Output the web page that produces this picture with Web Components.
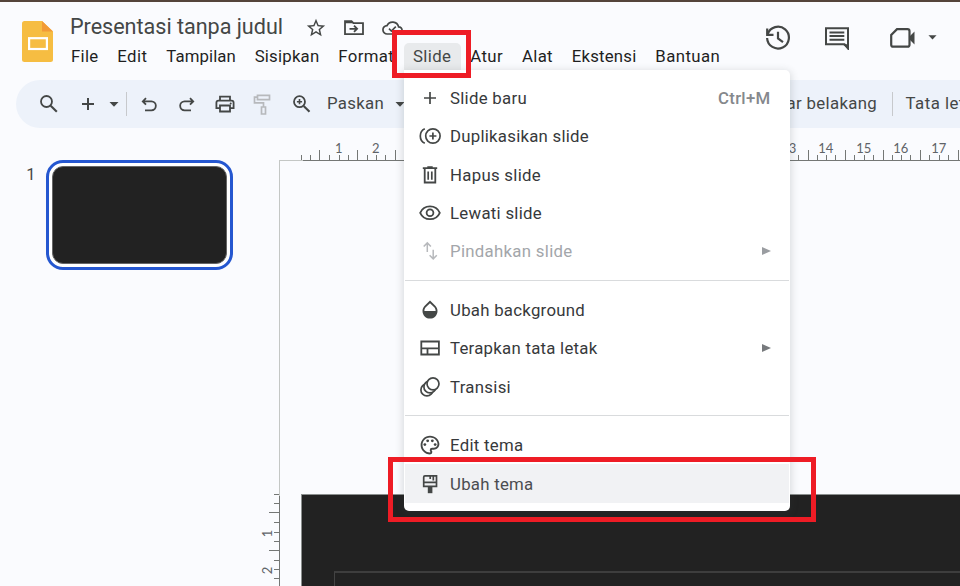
<!DOCTYPE html>
<html lang="id">
<head>
<meta charset="utf-8">
<title>Presentasi tanpa judul</title>
<style>
    body {
        margin: 0;
        background: #fafbfe;
        font-family: Roboto, "Liberation Sans", sans-serif;
        overflow: hidden;
    }
</style>
</head>
<body>
<slides-app></slides-app>

<script>
// icons by name, each one is [viewBox, markup]
const ICONS = {
    logo: ["0 0 31 41", `<path fill="#f6bd42" d="M2.5 0H20l11 10.500V38.500Q31 41 28.500 41h-26Q0 41 0 38.500v-36Q0 0 2.500 0z"/><path fill="#f29a36" d="M20 0l11 10.500H20z"/><rect x="7.100" y="17.200" width="17.800" height="10.800" fill="none" stroke="#fff" stroke-width="2.200"/>`],
    star: ["0 0 24 24", `<path d="M22 9.240l-7.190-.620L12 2 9.190 8.630 2 9.240l5.460 4.730L5.820 21 12 17.270 18.180 21l-1.630-7.030L22 9.240zM12 15.400l-3.760 2.270 1-4.280-3.320-2.880 4.380-.380L12 6.100l1.710 4.040 4.380.380-3.320 2.880 1 4.280L12 15.400z"/>`],
    folder: ["0 0 20 16", `<path d="M1 14.200V1.200h6.500l2 2H19v11z" ${line(1.8)}/><path d="M1 1.200h6.500l2 2H1z"/><path d="M5.500 8.800h7.200M10 5.700l3.100 3.100-3.100 3.100" ${line(1.8)}/>`],
    cloud: ["0 0 21 16", `<path d="M5.300 14A4.200 4.200 0 0 1 5 5.600 6.200 6.200 0 0 1 16.600 6.800 3.600 3.600 0 0 1 16.400 14z" ${line(1.7)}/><path d="M7 8.600l2.400 2.400 4.400-4.400" ${line(1.6)}/>`],
    history: ["0 0 26 26", `<path d="M2.600 9.300A10.900 10.900 0 1 1 2.100 13" ${line(2.2)}/><path d="M2.200 3.500v6.300h6.300" ${line(2.2)}/><path d="M13 6.700v6.800l5 3.700" ${line(2.2)}/>`],
    comment: ["0 0 26 24", `<path d="M24 22.500V2.200H2v16h18.500z" ${line(2)}/><path d="M18.500 18.200H25V24z"/><path d="M5.500 6.500h14.800M5.500 10.100h14.800M5.500 13.800h14.800" ${line(2)}/>`],
    meet: ["0 0 26 20", `<path d="M7 1.200h10.500q2 0 2 2v13.500q0 2-2 2H3.200q-2 0-2-2V7z" ${line(2.2)}/><path d="M19 9l5.500-5.500v13L19 11z"/>`],
    caret: ["0 0 10 5", `<path d="M.5 0h9L5 4.800z"/>`],
    search: ["0 0 24 24", `<circle cx="9.500" cy="9.500" r="5.500" ${line(1.8)}/><path d="M13.700 13.700l6.100 6.100" ${line(2.1)}/>`],
    plus: ["0 0 24 24", `<path d="M12 6v12M6 12h12" ${line(2)}/>`],
    undo: ["0 0 24 24", `<path d="M9 6.200L5.800 9.400l3.200 3.200M6 9.400h8.400a4 4 0 0 1 0 8.900H8" ${line(1.8)}/>`],
    redo: ["0 0 24 24", `<path d="M15 6.200l3.200 3.200-3.200 3.200M18 9.400H9.600a4 4 0 0 0 0 8.900h6.400" ${line(1.8)}/>`],
    print: ["0 0 24 24", `<path d="M7 8.500V4.700h10v3.800M6.800 16.200H3.400v-5.500q0-2 2-2h13.200q2 0 2 2v5.500h-3.400M7 13.500h10v6H7z" ${line(1.8)}/><circle cx="17.700" cy="11.500" r="1"/>`],
    roller: ["0 0 24 24", `<path d="M7.500 3.400h12v4.200h-12zM7.500 5.200H4.500v5.700h9v4M11.500 15h4v7h-4z" ${line(1.7)}/>`],
    zoom: ["0 0 24 24", `<circle cx="9.500" cy="9.700" r="5.500" ${line(1.8)}/><path d="M13.700 13.900l5.800 5.800" ${line(2.1)}/><path d="M9.500 7.100v5.200M6.900 9.700h5.200" ${line(1.6)}/>`],
    add: ["0 0 24 24", `<path d="M12 6v12M6 12h12" ${line(1.7)}/>`],
    duplicate: ["0 0 24 24", `<circle cx="14.900" cy="12" r="7.200" ${line(1.7)}/><path d="M14.900 8.500v7M11.400 12h7M6.800 4.700C3.900 6 2.300 8.800 2.300 12s1.600 6 4.500 7.300" ${line(1.7)}/>`],
    trash: ["0 0 24 24", `<path d="M4.800 5.200h14.400M6.700 5.200v14.300h10.600V5.200M9.300 4.100h5.400" ${line(1.8)}/><path d="M10.200 8.500v8.200M13.800 8.500v8.200" ${line(1.7)}/>`],
    eye: ["0 0 24 24", `<path d="M2.200 11.800C3.900 8 7.600 5.400 12 5.400s8.100 2.600 9.800 6.400c-1.700 3.800-5.400 6.400-9.800 6.400s-8.100-2.600-9.800-6.400z" ${line(1.8)}/><circle cx="12" cy="11.800" r="3.400" ${line(1.8)}/>`],
    swap: ["0 0 24 24", `<path d="M9.300 13V4M5.700 7.500l3.600-3.600 3.600 3.600M15.200 10.800v9M11.600 16.300l3.600 3.600 3.600-3.600" ${line(1.5)}/>`],
    drop: ["-.8 -.3 25.600 25.600", `<path d="M17.660 8L12 2.350 6.340 8C4.780 9.560 4 11.640 4 13.640s.780 4.110 2.340 5.670 3.610 2.350 5.660 2.350 4.100-.790 5.660-2.350S20 15.640 20 13.640 19.220 9.560 17.660 8zM6 13.500c.010-1.900.620-3 1.760-4.100L12 5.200l4.240 4.200C17.380 10.500 17.990 11.600 18 13.500H6z"/>`],
    layout: ["0 0 24 24", `<path d="M3.300 5.500h17.600v13H3.300zM3.300 12.300h17.600M9.500 12.300v6.200" ${line(1.8)}/>`],
    motion: ["0 0 24 24", `<g stroke="#444746" stroke-width="1.700" fill="#fff"><circle cx="8.900" cy="14.900" r="6"/><circle cx="11.900" cy="11.900" r="6"/><circle cx="15" cy="8.800" r="6"/></g>`],
    palette: ["-.8 -.8 25.600 25.600", `<path d="M12 22C6.490 22 2 17.510 2 12S6.490 2 12 2s10 4.040 10 9c0 3.310-2.690 6-6 6h-1.770c-.280 0-.5.220-.5.5 0 .120.050.230.130.330.410.470.640 1.060.640 1.670A2.500 2.500 0 0 1 12 22zm0-18c-4.410 0-8 3.590-8 8s3.590 8 8 8c.280 0 .5-.220.5-.5a.540.540 0 0 0-.140-.350c-.410-.460-.630-1.050-.630-1.650a2.500 2.500 0 0 1 2.500-2.500H16c2.210 0 4-1.790 4-4 0-3.860-3.590-7-8-7z"/><circle cx="6.500" cy="11.500" r="1.500"/><circle cx="9.500" cy="7.500" r="1.500"/><circle cx="14.500" cy="7.500" r="1.500"/><circle cx="17.500" cy="11.500" r="1.500"/>`],
    brush: ["0 0 24 24", `<path d="M5.700 14.300V5.200q0-1.300 1.300-1.300h11.500v10.400zM5.700 10.400h12.800M12.200 4v3M15.300 4v4.500" ${line(1.7)}/><path d="M9.800 14h4.600v7.200H9.800z"/>`],
    more: ["0 0 9 8", `<path d="M0 0l9 4-9 4z"/>`]
};

function line(width) {
    return `fill="none" stroke="currentColor" stroke-width="${width}"`;
}

class UiIcon extends HTMLElement {

    constructor() {
        super();
        const root = this.attachShadow({mode: "open"});
        const [box, shape] = ICONS[this.getAttribute("name")];
        const w = this.getAttribute("w") || 24;
        const h = this.getAttribute("h") || 24;
        root.innerHTML = `
            <style>
                :host { display: block; flex: none; width: ${w}px; height: ${h}px; color: #444746; }
                :host([muted]) { color: #b7b9bc; }
                :host([grey]) { color: #9a9da1; }
                :host([mid]) { color: #777a7d; }
                svg { display: block; width: 100%; height: 100%; fill: currentColor; }
            </style>
            <svg viewBox="${box}">${shape}</svg>
        `;
    }

}

// label that tracks its letters out to the given width
class FitLabel extends HTMLElement {

    constructor() {
        super();
        this.attachShadow({mode: "open"}).innerHTML = `
            <style>
                :host { display: block; flex: none; white-space: nowrap; }
            </style>
            <slot></slot>
        `;
    }

    connectedCallback() {
        const w = parseFloat(this.getAttribute("w"));
        const range = document.createRange();
        range.selectNodeContents(this);
        const natural = range.getBoundingClientRect().width;
        this.style.width = w + "px";
        this.style.letterSpacing = (w - natural) / this.textContent.length + "px";
    }

}

class MenuBar extends HTMLElement {

    constructor() {
        super();
        const items = [["File", 27.5], ["Edit", 30.3], ["Tampilan", 69.5], ["Sisipkan", 64.8], ["Format", 56],
            ["Slide", 38.4], ["Atur", 33], ["Alat", 31], ["Ekstensi", 64.8], ["Bantuan", 65]];
        this.attachShadow({mode: "open"}).innerHTML = `
            <style>
                :host { display: flex; font-size: 16.8px; line-height: 27px; height: 27px; color: #1f1f1f; }
                div { padding: 0 9.4px; }
                .open { background: #e8eaec; border-radius: 5px 5px 0 0; color: #444746; }
            </style>
            ${items.map(([text, w]) => `<div class="${text === "Slide" ? "open" : ""}"><fit-label w="${w}">${text}</fit-label></div>`).join("")}
        `;
    }

}

class AppHeader extends HTMLElement {

    constructor() {
        super();
        this.attachShadow({mode: "open"}).innerHTML = `
            <style>
                :host { display: flex; height: 80px; border-top: 2px solid #54443a; box-sizing: border-box; }
                .logo { margin: 19px 0 0 22px; }
                .main { margin-left: 8.6px; width: 680px; }
                .title { display: flex; align-items: center; height: 41px; padding-left: 8.4px; font-size: 21.6px; color: #444746; }
                .title fit-label { line-height: 26px; margin-bottom: -9px; }
                .title ui-icon { margin-top: 11px; }
                .star { margin-left: 22px; }
                .folder { margin-left: 17px; }
                .cloud { margin-left: 18px; }
                .actions { display: flex; align-items: center; height: 72px; margin-left: 23.5px; }
                .actions .comment { margin-left: 33px; }
                .actions .meet { margin-left: 39.5px; }
                .actions .caret { margin-left: 12px; margin-bottom: 2px; }
            </style>
            <ui-icon class="logo" name="logo" w="31" h="41"></ui-icon>
            <div class="main">
                <div class="title">
                    <fit-label w="213">Presentasi tanpa judul</fit-label>
                    <ui-icon class="star" name="star" w="22" h="22"></ui-icon>
                    <ui-icon class="folder" name="folder" w="20" h="16"></ui-icon>
                    <ui-icon class="cloud" name="cloud" w="21" h="16"></ui-icon>
                </div>
                <menu-bar></menu-bar>
            </div>
            <div class="actions">
                <ui-icon name="history" w="26" h="26"></ui-icon>
                <ui-icon class="comment" name="comment" w="26" h="24"></ui-icon>
                <ui-icon class="meet" name="meet" w="26" h="20"></ui-icon>
                <ui-icon class="caret" name="caret" w="9" h="5"></ui-icon>
            </div>
        `;
    }

}

class ToolBar extends HTMLElement {

    constructor() {
        super();
        this.attachShadow({mode: "open"}).innerHTML = `
            <style>
                :host {
                    display: flex;
                    align-items: center;
                    height: 48px;
                    margin-left: 16px;
                    border-radius: 24px 0 0 24px;
                    background: #edf2fa;
                    overflow: hidden;
                    font-size: 16.8px;
                    color: #444746;
                }
                i { flex: none; width: 1px; height: 24px; background: #c7c9cc; }
                fit-label { padding-bottom: 2px; }
                .fill { flex: none; width: 472.5px; display: flex; justify-content: flex-end; }
            </style>
            <ui-icon name="search" style="margin-left:20.5px"></ui-icon>
            <ui-icon name="plus" style="margin-left:15.5px"></ui-icon>
            <ui-icon name="caret" w="10" h="5" style="margin-left:9px"></ui-icon>
            <i style="margin-left:7px"></i>
            <ui-icon name="undo" style="margin-left:10px"></ui-icon>
            <ui-icon name="redo" style="margin-left:14px"></ui-icon>
            <ui-icon name="print" style="margin-left:14px"></ui-icon>
            <ui-icon name="roller" muted style="margin-left:13px"></ui-icon>
            <ui-icon name="zoom" style="margin-left:15.5px"></ui-icon>
            <fit-label w="57" style="margin-left:13.5px">Paskan</fit-label>
            <ui-icon name="caret" w="10" h="5" style="margin-left:10.5px"></ui-icon>
            <div class="fill"><fit-label w="115">Latar belakang</fit-label></div>
            <i style="margin-left:15px"></i>
            <fit-label w="78" style="margin-left:12.5px">Tata letak</fit-label>
        `;
    }

}

class FilmStrip extends HTMLElement {

    constructor() {
        super();
        this.attachShadow({mode: "open"}).innerHTML = `
            <style>
                :host { display: flex; width: 269px; padding-top: 32px; box-sizing: border-box; }
                .number { width: 46px; padding: 5px 10.5px 0 0; box-sizing: border-box; text-align: right; font-size: 16.5px; color: #444746; }
                .thumb {
                    width: 187px;
                    height: 110px;
                    box-sizing: border-box;
                    border: 3px solid #2557d0;
                    border-radius: 17px;
                    padding: 3px;
                    background: #fff;
                }
                .slide { height: 100%; box-sizing: border-box; border: 1px solid #666; border-radius: 11px; background: #222; }
            </style>
            <div class="number">1</div>
            <div class="thumb"><div class="slide"></div></div>
        `;
    }

}

// ruler in centimetres, a tick for every quarter
class RulerScale extends HTMLElement {

    constructor() {
        super();
        const vertical = this.hasAttribute("vertical");
        const unit = 37.5;
        const zero = vertical ? 366.6 : 32.6;
        const length = vertical ? 458 : 691;
        // numbers under the open menu are left out
        const [from, to] = (this.getAttribute("skip") || "0 0").split(" ").map(Number);
        let marks = "";
        for (let n = 0; zero + n * unit < length; n++) {
            const start = Math.floor(zero + n * unit) + 0.5;
            [0, 9, n < 2 ? 18 : 19, 28].forEach((offset, quarter) => {
                const p = start + offset;
                const size = quarter === 2 ? 11 : 6;
                marks += vertical
                    ? `<path d="M${11 - size} ${p}H11"/>`
                    : `<path d="M${p} ${33 - size}V33"/>`;
            });
            if (n > 0 && (n < from || n > to)) {
                marks += vertical
                    ? `<text transform="translate(3 ${start + 1}) rotate(-90)">${n}</text>`
                    : `<text x="${start - .7}" y="25">${n}</text>`;
            }
        }
        const base = vertical
            ? `<path class="pale" d="M10.5 32V368"/><path d="M10.5 368V458"/>`
            : `<path class="pale" d="M10 32.5H34"/><path d="M34 32.5H691"/>`;
        this.attachShadow({mode: "open"}).innerHTML = `
            <style>
                :host { display: block; }
                svg { display: block; overflow: visible; }
                path { stroke: #747775; fill: none; }
                .pale { stroke: #c4c7c5; }
                text { font: 13px Lato, sans-serif; fill: #5f6368; text-anchor: middle; }
            </style>
            <svg width="${vertical ? 11 : 691}" height="${vertical ? 458 : 33}">${marks}${base}</svg>
        `;
    }

}

class SlideCanvas extends HTMLElement {

    constructor() {
        super();
        this.attachShadow({mode: "open"}).innerHTML = `
            <style>
                :host { display: grid; grid-template: 33px 425px / 11px 680px; }
                .across { grid-area: 1 / 1 / 2 / 3; }
                .down { grid-area: 1 / 1 / 3 / 2; }
                .area { grid-area: 2 / 2; padding: 333px 0 0 21px; }
                .slide {
                    height: 92px;
                    box-sizing: border-box;
                    border: solid #8b8f8e;
                    border-width: 1px 0 0 1px;
                    background: #222;
                    padding: 76px 0 0 32px;
                }
                .frame { height: 15px; box-sizing: border-box; border: solid #444; border-width: 2px 0 0 1px; border-top-color: #3e3e3e; }
            </style>
            <ruler-scale class="across" skip="3 12"></ruler-scale>
            <ruler-scale class="down" vertical></ruler-scale>
            <div class="area"><div class="slide"><div class="frame"></div></div></div>
        `;
    }

}

class MenuRow extends HTMLElement {

    constructor() {
        super();
        const off = this.hasAttribute("off");
        this.attachShadow({mode: "open"}).innerHTML = `
            <style>
                :host {
                    display: flex;
                    align-items: center;
                    height: 38.4px;
                    margin: 0 1px;
                    padding: 0 18.5px 0 12.5px;
                    font-size: 16.8px;
                    color: #37393b;
                }
                :host([off]) { color: #a3a6aa; }
                :host([active]) { background: #f1f2f4; color: #4b4d50; }
                fit-label { margin-left: 8.5px; }
                .end { margin-left: auto; }
                .key { font-weight: 500; color: #85888c; }
            </style>
            <ui-icon name="${this.getAttribute("icon")}" ${off ? "muted" : ""}></ui-icon>
            <fit-label w="${this.getAttribute("w")}">${this.getAttribute("label")}</fit-label>
            ${this.hasAttribute("key") ? `<fit-label class="end key" w="52.5">${this.getAttribute("key")}</fit-label>` : ""}
            ${this.hasAttribute("sub") ? `<ui-icon class="end" name="more" w="9" h="8" ${off ? "grey" : "mid"}></ui-icon>` : ""}
        `;
    }

}

class DropMenu extends HTMLElement {

    constructor() {
        super();
        this.attachShadow({mode: "open"}).innerHTML = `
            <style>
                :host {
                    display: block;
                    box-sizing: border-box;
                    width: 386px;
                    height: 441px;
                    padding-top: 8.7px;
                    border-radius: 0 5px 5px 5px;
                    background: #fff;
                    box-shadow: 0 2px 7px 2px rgba(60, 64, 67, .15);
                }
                ::slotted(hr) { height: 1px; margin: 9.2px 1px 9.9px; border: 0; background: #d9dbdd; }
            </style>
            <slot></slot>
        `;
    }

}

class RedMark extends HTMLElement {

    constructor() {
        super();
        this.attachShadow({mode: "open"}).innerHTML = `
            <style>
                :host { display: block; box-sizing: border-box; border: 5px solid #ee1c25; }
            </style>
        `;
    }

}

class SlidesApp extends HTMLElement {

    constructor() {
        super();
        this.attachShadow({mode: "open"}).innerHTML = `
            <style>
                :host { display: block; position: relative; width: 960px; height: 586px; overflow: hidden; }
                .work { display: flex; height: 458px; }
                drop-menu, red-mark { position: absolute; }
                drop-menu { left: 404px; top: 70px; }
                .first { left: 392px; top: 30px; width: 79px; height: 48px; }
                .second { left: 388px; top: 457px; width: 428px; height: 65px; }
            </style>
            <app-header></app-header>
            <tool-bar></tool-bar>
            <div class="work">
                <film-strip></film-strip>
                <slide-canvas></slide-canvas>
            </div>
            <drop-menu>
                <menu-row icon="add" label="Slide baru" w="77" key="Ctrl+M"></menu-row>
                <menu-row icon="duplicate" label="Duplikasikan slide" w="139"></menu-row>
                <menu-row icon="trash" label="Hapus slide" w="91"></menu-row>
                <menu-row icon="eye" label="Lewati slide" w="92"></menu-row>
                <menu-row icon="swap" label="Pindahkan slide" w="122.5" off sub></menu-row>
                <hr>
                <menu-row icon="drop" label="Ubah background" w="135"></menu-row>
                <menu-row icon="layout" label="Terapkan tata letak" w="147.5" sub></menu-row>
                <menu-row icon="motion" label="Transisi" w="61"></menu-row>
                <hr>
                <menu-row icon="palette" label="Edit tema" w="73.5"></menu-row>
                <menu-row icon="brush" label="Ubah tema" w="83.5" active></menu-row>
            </drop-menu>
            <red-mark class="first"></red-mark>
            <red-mark class="second"></red-mark>
        `;
    }

}

customElements.define("slides-app", SlidesApp);
customElements.define("app-header", AppHeader);
customElements.define("menu-bar", MenuBar);
customElements.define("tool-bar", ToolBar);
customElements.define("film-strip", FilmStrip);
customElements.define("slide-canvas", SlideCanvas);
customElements.define("ruler-scale", RulerScale);
customElements.define("drop-menu", DropMenu);
customElements.define("menu-row", MenuRow);
customElements.define("red-mark", RedMark);
customElements.define("ui-icon", UiIcon);
customElements.define("fit-label", FitLabel);
</script>
</body>
</html>
